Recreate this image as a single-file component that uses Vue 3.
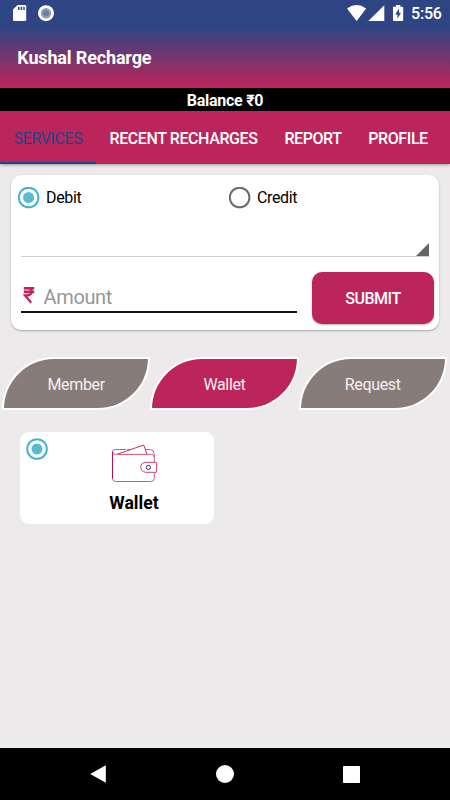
<script setup>
import { ref } from 'vue'

const tabs = [
    { label: 'SERVICES', key: 'services' },
    { label: 'RECENT RECHARGES', key: 'recent' },
    { label: 'REPORT', key: 'report' },
    { label: 'PROFILE', key: 'profile' },
]
const modes = ['Member', 'Wallet', 'Request']

const activeTab = ref('services')
const activeMode = ref('Wallet')
const txnType = ref('Debit')
const amount = ref('')
</script>

<template>
    <div class="screen">
        <header class="header">
            <div class="status-bar">
                <svg class="sd" width="14" height="17" viewBox="0 0 14 17">
                    <path d="M4.6 0H11.9Q13.2 0 13.2 1.3V14.7Q13.2 16 11.9 16H1.3Q0 16 0 14.7V4.6Z" fill="#fff" />
                    <path d="M5.8 1.8V5M8.4 1.8V5M11 1.8V5" stroke="#2f4583" stroke-width="1.5" />
                </svg>
                <svg class="sync" width="17" height="17" viewBox="0 0 17 17">
                    <circle cx="8" cy="8.2" r="8" fill="#fff" />
                    <circle cx="8" cy="8.2" r="5.2" fill="#8f9bbd" />
                    <circle cx="8" cy="8.2" r="2.9" fill="#6c7ba8" />
                </svg>
                <svg class="signals" width="58" height="17" viewBox="0 0 58 17">
                    <path d="M0 3.5Q9.6 -3.4 19.2 3.5L9.6 16Z" fill="#fff" />
                    <path d="M37.3 .3V15.9H21.3Z" fill="#fff" />
                    <path d="M46 1.8H49V0H53.3V1.8H55.2Q56.2 1.8 56.2 2.8V15Q56.2 16 55.2 16H47Q46 16 46 15Z" fill="#fff" />
                    <path d="M52 3.6L48.2 9.4H50.4V13.8L54 7.8H52Z" fill="#2f4583" />
                </svg>
                <span class="clock">5:56</span>
            </div>
            <h1 class="title">Kushal Recharge</h1>
        </header>

        <div class="balance">Balance ₹0</div>

        <nav class="tabs">
            <button
                v-for="tab in tabs"
                :key="tab.key"
                class="tab"
                :class="[tab.key, { active: activeTab === tab.key }]"
                @click="activeTab = tab.key"
            >
                {{ tab.label }}
            </button>
        </nav>

        <section class="form-card">
            <div class="radios">
                <label v-for="type in ['Debit', 'Credit']" :key="type" class="radio-label" @click="txnType = type">
                    <svg class="radio" :class="{ checked: txnType === type }" width="22" height="22" viewBox="0 0 22 22">
                        <circle class="ring" cx="10.6" cy="10.5" r="9.8" />
                        <circle v-if="txnType === type" class="dot" cx="10.6" cy="10.5" r="5.5" />
                    </svg>
                    {{ type }}
                </label>
            </div>
            <div class="spinner"></div>
            <div class="amount-row">
                <div class="amount-field">
                    <svg class="rupee" width="12" height="18" viewBox="0 0 12 18">
                        <path
                            d="M.8 2H11.2M.8 6.2H11.2M1.5 2H4.5Q8.6 2 8.6 5.5T4.5 9.4H2L8.2 16.8"
                            fill="none"
                            stroke="#c2205c"
                            stroke-width="2.2"
                        />
                        <path d="M1 4H10.8" stroke="#c2205c" stroke-width="1.2" />
                    </svg>
                    <input v-model="amount" class="amount-input" type="text" placeholder="Amount" />
                </div>
                <button class="submit">SUBMIT</button>
            </div>
        </section>

        <div class="modes">
            <button
                v-for="mode in modes"
                :key="mode"
                class="mode"
                :class="{ selected: activeMode === mode }"
                @click="activeMode = mode"
            >
                {{ mode }}
            </button>
        </div>

        <section class="wallet-card">
            <svg class="radio checked" width="22" height="22" viewBox="0 0 22 22">
                <circle class="ring" cx="11" cy="11" r="9.8" />
                <circle class="dot" cx="11" cy="11" r="5.5" />
            </svg>
            <div class="wallet-body">
                <svg width="48" height="40" viewBox="0 0 48 40" fill="none" stroke-width="1">
                    <path d="M2.5 8V35.5Q2.5 38.5 5.5 38.5H40.5Q44.3 38.5 44.3 35.5V28.5M44.3 19V14Q44.3 11.4 41.5 11.4H5.5Q2.5 11.4 2.5 8.8T5.5 6.5H16" stroke="#d05a82" />
                    <path d="M2.5 9V35.5" stroke="#b90f50" />
                    <path d="M7.5 11.2L33.7 2L37 11.2" stroke="#c52f63" />
                    <path d="M35.8 6.5H40.5Q44 7 44.2 10.5V14M17 6.7H21" stroke="#cf5a80" />
                    <path d="M46 19.3H35.5Q30.8 19.8 30.8 24T35.5 29.3H46Q46.6 29.3 46.6 28.5V20Q46.6 19.3 46 19.3Z" fill="#fff" stroke="#c8406f" />
                    <circle cx="38.4" cy="24.4" r="2.1" stroke="#2d3b7d" stroke-width="1" />
                </svg>
                <p class="wallet-name">Wallet</p>
            </div>
        </section>

        <footer class="nav-bar">
            <svg width="16" height="18" viewBox="0 0 16 18"><path d="M15.8 .3V17.7L.2 9Z" fill="#fff" /></svg>
            <svg width="18" height="18" viewBox="0 0 18 18"><circle cx="9" cy="9" r="9" fill="#fff" /></svg>
            <svg width="17" height="17" viewBox="0 0 17 17"><rect width="17" height="17" rx=".8" fill="#fff" /></svg>
        </footer>
    </div>
</template>

<style>
body {
    margin: 0;
    background: #eceaeb;
}
</style>

<style scoped>
.screen {
    width: 450px;
    height: 800px;
    display: flex;
    flex-direction: column;
    overflow: hidden;
    background: #eceaeb;
    font-family: Roboto, sans-serif;
    color: #000;
}

button,
input {
    font-family: inherit;
    border: 0;
    padding: 0;
    margin: 0;
    background: none;
    outline: none;
}

svg {
    display: block;
    flex-shrink: 0;
}

.header {
    height: 88px;
    background: linear-gradient(#2f4583 0, #2f4583 27px, #bb255b 87px);
    color: #fff;
}

.status-bar {
    height: 27px;
    box-sizing: border-box;
    padding: 5px 9px 0 13px;
    display: flex;
}

.sync {
    margin-left: 11px;
}

.signals {
    margin-left: auto;
}

.clock {
    width: 30px;
    margin-left: 6px;
    font-size: 16px;
    letter-spacing: -0.2px;
    font-weight: 500;
    line-height: 18px;
    white-space: nowrap;
}

.title {
    margin: 20px 0 0 17.3px;
    font-size: 18px;
    letter-spacing: -0.15px;
    line-height: 22px;
    font-weight: 700;
}

.balance {
    height: 23px;
    background: #000;
    color: #fff;
    text-align: center;
    font-size: 16px;
    letter-spacing: -0.25px;
    line-height: 25px;
    font-weight: 700;
}

.tabs {
    height: 52.5px;
    flex-shrink: 0;
    display: flex;
    background: #bb255b;
    box-shadow: 0 1px 3px rgba(0, 0, 0, 0.35);
}

.tab {
    box-sizing: border-box;
    padding-top: 3.5px;
    border-bottom: 2px solid transparent;
    color: #fff;
    font-size: 16px;
    letter-spacing: -0.4px;
    font-weight: 500;
    white-space: nowrap;
}

.tab.active {
    color: #1c4587;
    font-weight: 400;
    border-bottom-color: #1c4587;
}

.services {
    width: 96px;
}

.recent {
    width: 175px;
}

.report {
    width: 84px;
}

.profile {
    width: 86px;
}

.form-card {
    box-sizing: border-box;
    width: 428px;
    height: 155px;
    margin: 11.5px 0 0 11px;
    padding: 12px 5px 0 7px;
    background: #fff;
    border-radius: 10px;
    box-shadow: 0 1px 2px rgba(0, 0, 0, 0.3);
}

.radios {
    display: grid;
    grid-template-columns: 211px 1fr;
}

.radio-label {
    display: flex;
    align-items: center;
    gap: 6px;
    font-size: 16px;
    letter-spacing: -0.35px;
    line-height: 22px;
}

.ring {
    fill: none;
    stroke: #6b6b6b;
    stroke-width: 2;
}

.checked .ring {
    stroke: #45b5cf;
}

.dot {
    fill: #5bbad2;
}

.spinner {
    height: 47px;
    margin: 0 5px 0 3px;
    border-bottom: 1px solid #d0d0d0;
    display: flex;
    align-items: flex-end;
    justify-content: flex-end;
}

.spinner::after {
    content: '';
    width: 13px;
    height: 13px;
    background: #666;
    clip-path: polygon(100% 0, 100% 100%, 0 100%);
}

.amount-row {
    display: flex;
    margin: 15px 0 0 3px;
}

.amount-field {
    box-sizing: border-box;
    width: 275.5px;
    height: 41px;
    padding: 14px 0 0 2px;
    display: flex;
    border-bottom: 2px solid #111;
}

.amount-input {
    width: 220px;
    height: 24px;
    margin: -1px 0 0 8.5px;
    font-size: 20px;
    letter-spacing: -0.35px;
}

.amount-input::placeholder {
    color: #969696;
    opacity: 1;
}

.submit {
    width: 122px;
    height: 52px;
    margin-left: 15.5px;
    padding-top: 1px;
    border-radius: 10px;
    background: #bb255b;
    color: #fff;
    font-size: 16px;
    letter-spacing: -0.5px;
    font-weight: 500;
    box-shadow: 0 1px 2px rgba(0, 0, 0, 0.3);
}

.modes {
    display: flex;
    padding: 27px 0 0 2px;
}

.mode {
    box-sizing: border-box;
    width: 148.3px;
    height: 53px;
    padding-top: 2px;
    border: 2px solid #fff;
    border-radius: 52px 0 52px 0;
    background: #887c7b;
    color: #f5f1f1;
    font-size: 16px;
    letter-spacing: -0.35px;
}

.mode.selected {
    background: #bb255b;
}

.wallet-card {
    box-sizing: border-box;
    width: 194.5px;
    height: 92px;
    margin: 22px 0 0 19.5px;
    padding: 6px 0 0 6.5px;
    display: flex;
    background: #fff;
    border-radius: 9px;
}

.wallet-body {
    width: 88px;
    margin: 5px 0 0 42px;
    display: flex;
    flex-direction: column;
    align-items: center;
}

.wallet-name {
    margin: 9px 0 0;
    font-size: 17.6px;
    line-height: 22px;
    font-weight: 700;
}

.nav-bar {
    box-sizing: border-box;
    height: 52px;
    margin-top: auto;
    padding: 0 90px;
    display: flex;
    align-items: center;
    justify-content: space-between;
    background: #000;
}
</style>
